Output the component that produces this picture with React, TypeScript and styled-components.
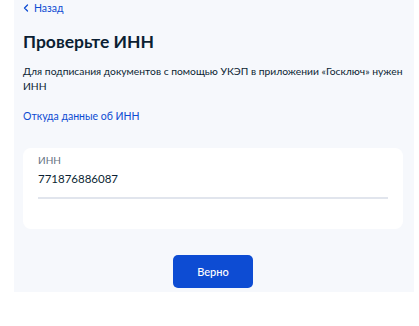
import React from "react";
import styled, { createGlobalStyle } from "styled-components";

const Global = createGlobalStyle`
  html, body { margin: 0; padding: 0; background: #ffffff; }
  body { font-family: Lato, "Noto Sans", sans-serif; -webkit-font-smoothing: antialiased; }
`;

const Panel = styled.div`
  margin-left: 14px;
  width: 400px;
  height: 292px;
  background: #f6f8fc;
  box-sizing: border-box;
  padding: 0 11px 0 9px;
  display: flex;
  flex-direction: column;
`;

const Back = styled.a`
  display: flex;
  align-items: center;
  gap: 5px;
  margin-top: 1px;
  height: 14px;
  color: #0d4cd3;
  font-size: 10.5px;
  text-decoration: none;
`;

const Title = styled.h1`
  margin: 16px 0 0;
  font-size: 17.5px;
  line-height: 22px;
  font-weight: 700;
  color: #0b1f33;
`;

const Text = styled.p`
  margin: 11px 0 0;
  font-size: 10.3px;
  line-height: 14.5px;
  color: #0b1f33;
`;

const Link = styled.a`
  margin-top: 16px;
  font-size: 10.5px;
  line-height: 15px;
  color: #0d4cd3;
  text-decoration: none;
`;

const Card = styled.div`
  margin-top: 24px;
  width: 380px;
  height: 81px;
  box-sizing: border-box;
  background: #ffffff;
  border-radius: 8px;
  padding: 5px 15px 0 15px;
  display: flex;
  flex-direction: column;
`;

const Label = styled.div`
  font-size: 10px;
  line-height: 14px;
  color: #66727f;
`;

const Value = styled.div`
  margin-top: 4px;
  font-size: 11.5px;
  line-height: 16px;
  color: #0b1f33;
  padding-bottom: 10px;
  border-bottom: 2px solid #e1e5ed;
`;

const Footer = styled.div`
  margin-top: 26px;
  display: flex;
  justify-content: center;
`;

const Button = styled.button`
  width: 80px;
  height: 33px;
  border: none;
  border-radius: 5px;
  background: #0d4cd3;
  color: #ffffff;
  font-family: Lato, "Noto Sans", sans-serif;
  font-size: 11px;
  font-weight: 500;
`;

export default function App() {
  return (
    <>
      <Global />
      <Panel>
        <Back href="#">
          <svg width="6" height="8" viewBox="0 0 6 8">
            <path d="M4.5 1 L1.5 4 L4.5 7" fill="none" stroke="#0d4cd3" strokeWidth="1.3" strokeLinecap="round" strokeLinejoin="round" />
          </svg>
          Назад
        </Back>
        <Title>Проверьте ИНН</Title>
        <Text>Для подписания документов с помощью УКЭП в приложении «Госключ» нужен ИНН</Text>
        <Link href="#">Откуда данные об ИНН</Link>
        <Card>
          <Label>ИНН</Label>
          <Value>771876886087</Value>
        </Card>
        <Footer>
          <Button>Верно</Button>
        </Footer>
      </Panel>
    </>
  );
}
